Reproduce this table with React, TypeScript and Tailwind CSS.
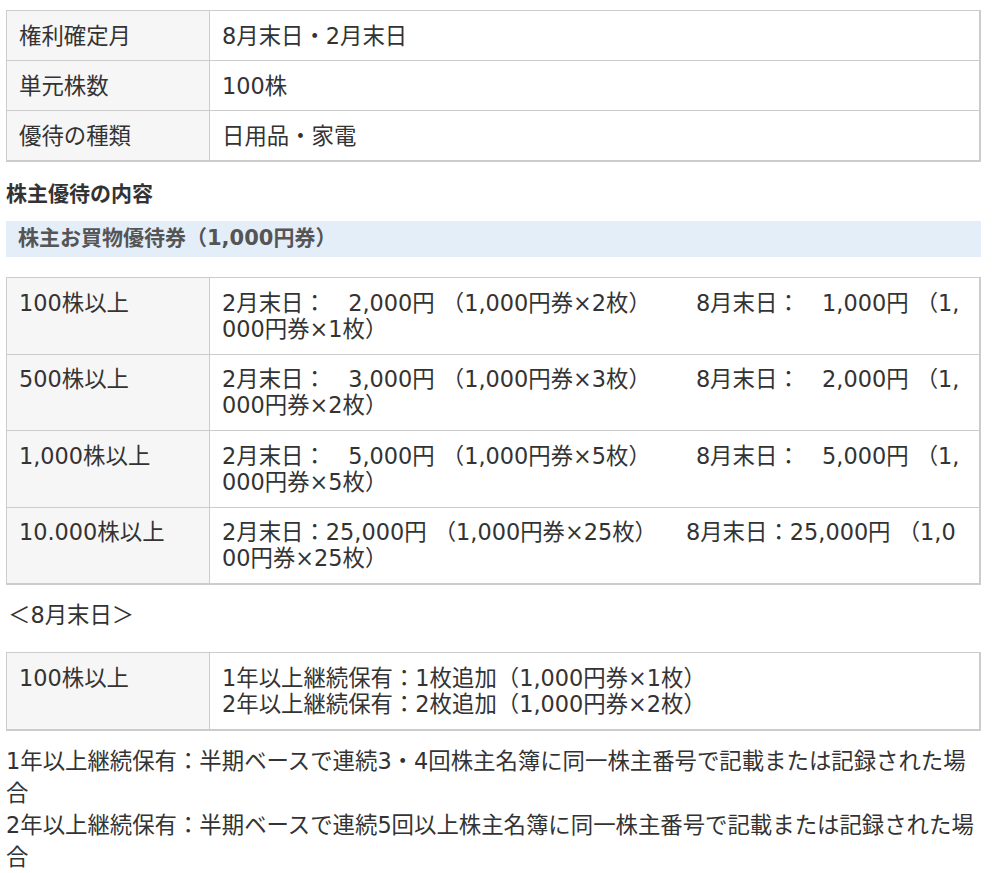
const font = { fontFamily: '"DejaVu Sans", "Noto Sans CJK JP", sans-serif' }

const basics = [
  { label: "権利確定月", value: "8月末日・2月末日" },
  { label: "単元株数", value: "100株" },
  { label: "優待の種類", value: "日用品・家電" },
]

function Tier({ a, b, wide }: { a: string; b: string; wide?: boolean }) {
  return (
    <>
      {a}
      <span className={wide ? "inline-block w-[29px]" : "inline-block w-[45px]"} />
      {b}
    </>
  )
}

const tiers = [
  { label: "100株以上", value: <Tier a="2月末日：　2,000円 （1,000円券×2枚）" b="8月末日：　1,000円 （1,000円券×1枚）" /> },
  { label: "500株以上", value: <Tier a="2月末日：　3,000円 （1,000円券×3枚）" b="8月末日：　2,000円 （1,000円券×2枚）" /> },
  { label: "1,000株以上", value: <Tier a="2月末日：　5,000円 （1,000円券×5枚）" b="8月末日：　5,000円 （1,000円券×5枚）" /> },
  { label: "10.000株以上", value: <Tier wide a="2月末日：25,000円 （1,000円券×25枚）" b="8月末日：25,000円 （1,000円券×25枚）" /> },
]

function Table({ rows, tall }: { rows: { label: string; value: React.ReactNode }[]; tall?: boolean }) {
  const pad = tall ? "py-[11.75px]" : "py-[11.5px]"
  return (
    <div className="w-[975px] border-t border-l border-r-2 border-b-2 border-[#cccccc]">
      {rows.map((r, i) => (
        <div key={i} className={`flex ${i > 0 ? "border-t border-[#cccccc]" : ""}`}>
          <div className={`w-[203px] shrink-0 border-r border-[#cccccc] bg-[#f6f6f6] px-[12px] ${pad} leading-[26px]`}>
            {r.label}
          </div>
          <div className={`min-w-0 flex-1 break-all px-[12px] ${pad} leading-[26px]`}>{r.value}</div>
        </div>
      ))}
    </div>
  )
}

export default function App() {
  return (
    <div lang="ja" style={font} className="min-h-screen bg-white pt-[10px] pl-[6px] text-[22.4px] text-[#333333]">
      <Table rows={basics} />

      <h3 className="mt-[18px] text-[21px] font-bold leading-[28px] text-[#333333]">株主優待の内容</h3>

      <div className="mt-[13px] flex h-[36px] w-[975px] items-center bg-[#e4eef9] px-[12px] text-[21px] font-bold text-[#555555]">
        株主お買物優待券（1,000円券）
      </div>

      <div className="mt-[20px]">
        <Table rows={tiers} tall />
      </div>

      <p className="mt-[14px] pl-[2px] leading-[32px]">＜8月末日＞</p>

      <div className="mt-[21px]">
        <Table
          tall
          rows={[
            {
              label: "100株以上",
              value: (
                <>
                  1年以上継続保有：1枚追加（1,000円券×1枚）
                  <br />
                  2年以上継続保有：2枚追加（1,000円券×2枚）
                </>
              ),
            },
          ]}
        />
      </div>

      <div className="mt-[14px] w-[975px] leading-[32px]">
        <p>1年以上継続保有：半期ベースで連続3・4回株主名簿に同一株主番号で記載または記録された場合</p>
        <p>2年以上継続保有：半期ベースで連続5回以上株主名簿に同一株主番号で記載または記録された場合</p>
      </div>
    </div>
  )
}
